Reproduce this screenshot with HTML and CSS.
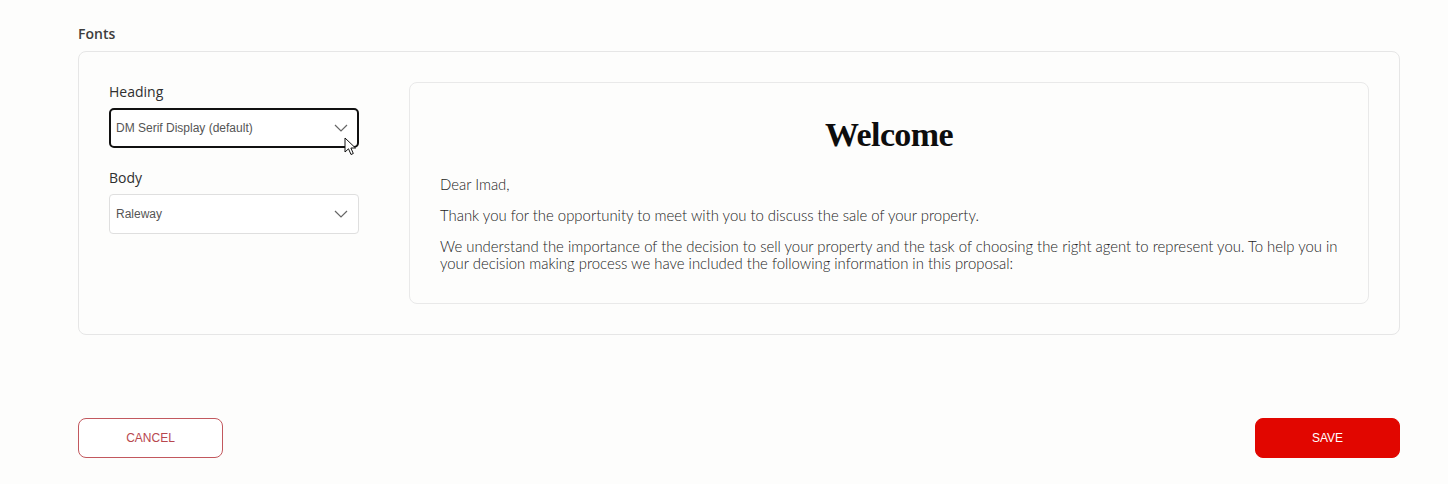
FILE: index.html
```html
<!DOCTYPE html>
<html>
<head>
<meta charset="utf-8">
<link rel="stylesheet" href="styles.css">
</head>
<body>
<div class="page">
  <div class="section-title">Fonts</div>
  <div class="card">
    <div class="controls">
      <label class="field-label">Heading</label>
      <div class="select active">
        <span class="select-value">DM Serif Display (default)</span>
        <svg class="chev" width="14" height="8" viewBox="0 0 14 8"><path d="M1 1 L7 7 L13 1" fill="none" stroke="#666" stroke-width="1.2"/></svg>
        <svg class="cursor" width="14" height="20" viewBox="0 0 14 20"><path d="M1 1 L1 15 L4.5 11.8 L7 17.5 L9.3 16.5 L6.9 11 L11.5 11 Z" fill="#fff" stroke="#111" stroke-width="1" stroke-linejoin="round"/></svg>
      </div>
      <label class="field-label body-label">Body</label>
      <div class="select">
        <span class="select-value">Raleway</span>
        <svg class="chev" width="14" height="8" viewBox="0 0 14 8"><path d="M1 1 L7 7 L13 1" fill="none" stroke="#666" stroke-width="1.2"/></svg>
      </div>
    </div>
    <div class="preview">
      <h1 class="preview-title">Welcome</h1>
      <p>Dear Imad,</p>
      <p>Thank you for the opportunity to meet with you to discuss the sale of your property.</p>
      <p>We understand the importance of the decision to sell your property and the task of choosing the right agent to represent you. To help you in your decision making process we have included the following information in this proposal:</p>
    </div>
  </div>
  <div class="actions">
    <button class="btn btn-cancel">CANCEL</button>
    <button class="btn btn-save">SAVE</button>
  </div>
</div>
</body>
</html>
```
FILE: styles.css
```css
html, body {
  margin: 0;
  padding: 0;
  background: #fdfdfc;
}
.page {
  padding: 24px 48px 0 78px;
  font-family: "Open Sans", "Liberation Sans", sans-serif;
}
.section-title {
  font-size: 14px;
  font-weight: 600;
  color: #3d3d3d;
  line-height: 20px;
  margin-bottom: 7px;
}
.card {
  border: 1px solid #e6e6e6;
  border-radius: 8px;
  padding: 30px;
  display: flex;
  gap: 50px;
  background: #fdfdfc;
}
.controls {
  width: 250px;
  flex: none;
  display: flex;
  flex-direction: column;
}
.field-label {
  font-size: 14px;
  color: #2f2f2f;
  line-height: 20px;
  margin-bottom: 6px;
}
.body-label {
  margin-top: 20px;
}
.select {
  position: relative;
  height: 40px;
  box-sizing: border-box;
  border: 1px solid #dfdfdf;
  border-radius: 4px;
  display: flex;
  align-items: center;
  justify-content: space-between;
  padding: 0 10px 0 6px;
  background: #fff;
}
.select.active {
  border: 2px solid #111;
  border-radius: 5px;
  padding-left: 5px;
  padding-right: 9px;
}
.select-value {
  font-family: "Liberation Sans", Arial, sans-serif;
  font-size: 12px;
  color: #555;
}
.chev {
  display: block;
}
.cursor {
  position: absolute;
  left: 233px;
  top: 27px;
}
.preview {
  flex: 1;
  border: 1px solid #e9e9e9;
  border-radius: 8px;
  padding: 30px 30px 31px 30px;
  font-family: "Lato", "Liberation Sans", sans-serif;
  font-size: 14.9px;
  font-weight: 300;
  color: #222;
  line-height: 17px;
}
.preview-title {
  font-family: "Liberation Serif", "DejaVu Serif", serif;
  font-weight: 700;
  font-size: 34px;
  line-height: 44px;
  text-align: center;
  margin: 0 0 19px 0;
  color: #0d0d0d;
  letter-spacing: -0.6px;
}
.preview p {
  margin: 0 0 14px 0;
}
.preview p:last-child {
  margin-bottom: 0;
}
.actions {
  display: flex;
  justify-content: space-between;
  margin-top: 83px;
}
.btn {
  width: 145px;
  height: 40px;
  border-radius: 8px;
  font-family: "Liberation Sans", Arial, sans-serif;
  font-size: 12px;
  cursor: pointer;
}
.btn-cancel {
  background: #fff;
  border: 1px solid #c2585e;
  color: #b8474e;
}
.btn-save {
  background: #e10600;
  border: 1px solid #e10600;
  color: #fff;
}
```
